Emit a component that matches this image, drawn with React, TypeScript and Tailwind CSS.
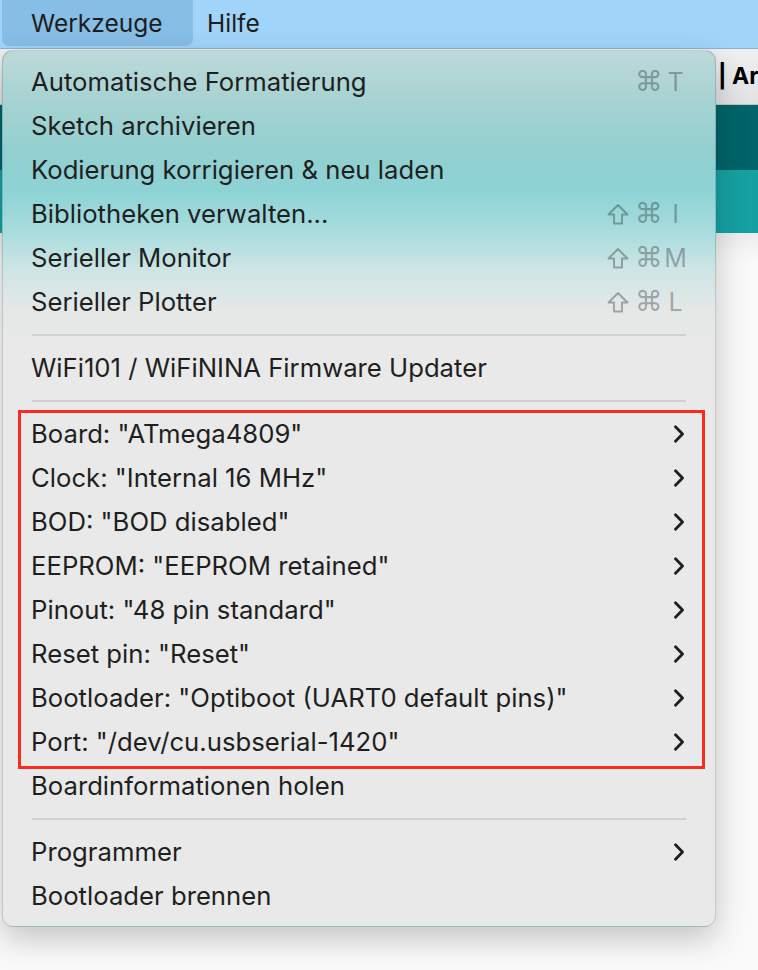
import React from 'react';

type Item =
    | { kind: 'item'; label: string; shift?: boolean; key?: string; sub?: boolean }
    | { kind: 'sep' };

const items: Item[] = [
    { kind: 'item', label: 'Automatische Formatierung', key: 'T' },
    { kind: 'item', label: 'Sketch archivieren' },
    { kind: 'item', label: 'Kodierung korrigieren & neu laden' },
    { kind: 'item', label: 'Bibliotheken verwalten...', shift: true, key: 'I' },
    { kind: 'item', label: 'Serieller Monitor', shift: true, key: 'M' },
    { kind: 'item', label: 'Serieller Plotter', shift: true, key: 'L' },
    { kind: 'sep' },
    { kind: 'item', label: 'WiFi101 / WiFiNINA Firmware Updater' },
    { kind: 'sep' },
    { kind: 'item', label: 'Board: "ATmega4809"', sub: true },
    { kind: 'item', label: 'Clock: "Internal 16 MHz"', sub: true },
    { kind: 'item', label: 'BOD: "BOD disabled"', sub: true },
    { kind: 'item', label: 'EEPROM: "EEPROM retained"', sub: true },
    { kind: 'item', label: 'Pinout: "48 pin standard"', sub: true },
    { kind: 'item', label: 'Reset pin: "Reset"', sub: true },
    { kind: 'item', label: 'Bootloader: "Optiboot (UART0 default pins)"', sub: true },
    { kind: 'item', label: 'Port: "/dev/cu.usbserial-1420"', sub: true },
    { kind: 'item', label: 'Boardinformationen holen' },
    { kind: 'sep' },
    { kind: 'item', label: 'Programmer', sub: true },
    { kind: 'item', label: 'Bootloader brennen' },
];

const Chevron = () => (
    <svg width="12" height="18" viewBox="0 0 12 18" className="block">
        <polyline points="2.5,1.8 9.5,9 2.5,16.2" fill="none" stroke="#1e1e1e" strokeWidth="2.8" strokeLinecap="round" strokeLinejoin="round" />
    </svg>
);

// outline shift arrow
const ShiftIcon = () => (
    <svg width="22" height="22" viewBox="0 0 22 22" className="block mr-[6px]">
        <polygon points="11,2 20.5,11.5 15,11.5 15,20.5 7,20.5 7,11.5 1.5,11.5" fill="none" stroke="currentColor" strokeWidth="1.9" strokeLinejoin="round" />
    </svg>
);

const MenuRow: React.FC<{ item: Extract<Item, { kind: 'item' }> }> = ({ item }) => (
    <div className="h-[44px] flex items-center justify-between pl-[28px] pr-[30px]">
        <span className="text-[25.7px] text-[#1f1f1f] leading-none whitespace-nowrap">{item.label}</span>
        {item.key && (
            <span className="flex items-center text-black/30 leading-none mr-[-3px]">
                {item.shift && <ShiftIcon />}
                <span className="font-['DejaVu_Sans',sans-serif] text-[28px]">⌘</span>
                <span className="w-[25px] text-center text-[25px]">{item.key}</span>
            </span>
        )}
        {item.sub && <Chevron />}
    </div>
);

export default function App() {
    return (
        <div className="w-[758px] h-[970px] relative overflow-hidden bg-[#fafafa] font-['Inter',sans-serif]">
            {/* menu bar */}
            <div className="h-[49px] bg-[#a0d4f9] border-b border-[#86b3d3] flex items-start">
                <div className="ml-[2px] h-[46px] w-[191px] rounded-b-[7px] bg-[#87bee6] flex items-center pl-[29px] text-[24.5px] text-[#1d1d1d]">
                    Werkzeuge
                </div>
                <div className="h-[46px] flex items-center pl-[14px] text-[24.5px] text-[#1d1d1d]">Hilfe</div>
            </div>

            {/* app window behind */}
            <div className="h-[56px] bg-[linear-gradient(180deg,#f0f0f0,#e2e2e2)] border-b border-[#c4c4c4] flex items-center pl-[718px]">
                <span className="text-[23px] font-bold text-black whitespace-nowrap">| Ar</span>
            </div>
            <div className="h-[65px] bg-[#006468]" />
            <div className="h-[63px] bg-[#17a0a2]" />
            <div className="h-[30px] bg-[linear-gradient(180deg,#ececec,#fafafa)]" />

            {/* dropdown */}
            <div className="absolute left-[2px] top-[50px] w-[714px] rounded-[11px] border border-black/15 shadow-[0_12px_32px_rgba(0,0,0,0.22)] bg-[linear-gradient(180deg,#bdd9d9_0px,#a6d3d2_50px,#93cfd0_100px,#8dd3d5_140px,#a8dcdd_180px,#cfe5e5_220px,#e4e8e7_260px,#e8e9e8_300px,#e8e9e8_100%)] pt-[9px] pb-[8px]">
                {items.map((item, i) =>
                    item.kind === 'sep' ? (
                        <div key={i} className="h-[22px] flex items-center px-[29px]">
                            <div className="h-[2px] w-full bg-[#cfd0cf]" />
                        </div>
                    ) : (
                        <MenuRow key={i} item={item} />
                    )
                )}
                <div className="absolute left-[15px] top-[359px] w-[687px] h-[359px] border-[3px] border-[#fb2b1f] pointer-events-none" />
            </div>
        </div>
    );
}
